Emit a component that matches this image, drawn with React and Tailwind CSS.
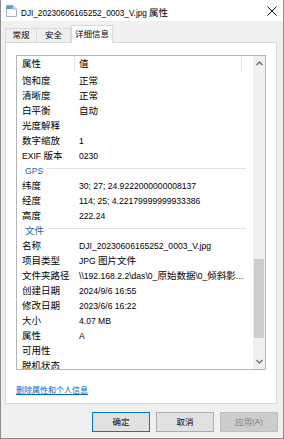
import React from 'react';

const CJK = /([\u2e80-\u9fff\uff00-\uffef]+)/;

// splits a string into CJK and latin runs so each gets its own size
function Mixed({ text, cjk, lat }) {
  return text
    .split(CJK)
    .filter(Boolean)
    .map((part, i) =>
      CJK.test(part) ? (
        <span key={i} className={cjk}>
          {part}
        </span>
      ) : (
        <span key={i} className={lat}>
          {part}
        </span>
      )
    );
}

const rows = [
  { k: '饱和度', v: '正常' },
  { k: '清晰度', v: '正常' },
  { k: '白平衡', v: '自动' },
  { k: '光度解释', v: '' },
  { k: '数字缩放', v: '1' },
  { k: 'EXIF 版本', v: '0230' },
  { group: 'GPS' },
  { k: '纬度', v: '30; 27; 24.9222000000008137' },
  { k: '经度', v: '114; 25; 4.22179999999933386' },
  { k: '高度', v: '222.24' },
  { group: '文件' },
  { k: '名称', v: 'DJI_20230606165252_0003_V.jpg' },
  { k: '项目类型', v: 'JPG 图片文件' },
  { k: '文件夹路径', v: '\\\\192.168.2.2\\das\\0_原始数据\\0_倾斜影...' },
  { k: '创建日期', v: '2024/9/6 16:55' },
  { k: '修改日期', v: '2023/6/6 16:22' },
  { k: '大小', v: '4.07 MB' },
  { k: '属性', v: 'A' },
  { k: '可用性', v: '' },
  { k: '脱机状态', v: '' },
];

function Row({ row }) {
  if (row.group) {
    return (
      <div className="h-[15px] flex items-center pl-[8px] shrink-0">
        <span className="text-[#2b5fb3] leading-none whitespace-nowrap">
          <Mixed text={row.group} cjk="text-[9.5px]" lat="text-[8.6px]" />
        </span>
        <div className="flex-1 h-px bg-[#dfe5ef] ml-[4px] mr-[7px]" />
      </div>
    );
  }
  return (
    <div className="h-[15px] flex items-center shrink-0 text-black whitespace-nowrap">
      <div className="w-[58px] pl-[5px] leading-none">
        <Mixed text={row.k} cjk="text-[9.5px]" lat="text-[8.6px]" />
      </div>
      <div className="flex-1 pl-[4px] leading-none overflow-hidden">
        <Mixed text={row.v} cjk="text-[9.5px]" lat="text-[8.6px]" />
      </div>
    </div>
  );
}

function Chevron({ up }) {
  return (
    <svg width="7" height="5" viewBox="0 0 7 5">
      <polyline
        points={up ? '0.5,4 3.5,1 6.5,4' : '0.5,1 3.5,4 6.5,1'}
        fill="none"
        stroke="#606060"
        strokeWidth="1.2"
      />
    </svg>
  );
}

export default function App() {
  return (
    <div className="w-[284px] h-[439px] bg-[#f0f0f0] border-x border-b border-[#8c8c8c] font-['Liberation_Sans','Noto_Sans_CJK_SC',sans-serif] text-black overflow-hidden flex flex-col">
      {/* Title bar */}
      <div className="h-[21px] bg-white flex items-center shrink-0">
        <svg width="11" height="12" viewBox="0 0 11 12" className="ml-[5px]">
          <path d="M0.5 0.5 H7 L10.5 4 V11.5 H0.5 Z" fill="#ffffff" stroke="#9db4cc" />
          <path d="M0.5 0.5 H7 V4 H0.5 Z" fill="#5a9be0" />
          <path d="M7 0.5 V4 H10.5" fill="none" stroke="#9db4cc" />
        </svg>
        <div className="ml-[4px] leading-none whitespace-nowrap">
          <Mixed text="DJI_20230606165252_0003_V.jpg 属性" cjk="text-[9.5px]" lat="text-[8.2px]" />
        </div>
        <div className="flex-1" />
        <svg width="10" height="10" viewBox="0 0 10 10" className="mr-[6px]">
          <path d="M0.5 0.5 L9.5 9.5 M9.5 0.5 L0.5 9.5" stroke="#1a1a1a" strokeWidth="1" />
        </svg>
      </div>

      {/* Tabs */}
      <div className="h-[21px] flex items-end pl-[4px] shrink-0">
        <div className="h-[14px] w-[32px] border border-b-0 border-[#d9d9d9] flex items-center justify-center text-[8.5px] leading-none">
          常规
        </div>
        <div className="h-[14px] w-[34px] border border-b-0 border-l-0 border-[#d9d9d9] flex items-center justify-center text-[8.5px] leading-none">
          安全
        </div>
        <div className="h-[18px] w-[42px] -mb-px relative z-10 bg-white border border-b-0 border-[#d9d9d9] flex items-center justify-center text-[8.5px] leading-none">
          详细信息
        </div>
      </div>

      {/* Panel */}
      <div className="ml-[4px] w-[272px] h-[362px] bg-white border border-[#d9d9d9] flex flex-col pl-[10px] pt-[12px] shrink-0">
        <div className="w-[250px] h-[315px] border border-[#b4b4b4] flex overflow-hidden">
          <div className="flex-1 flex flex-col overflow-hidden">
            {/* Header */}
            <div className="h-[15px] flex shrink-0 whitespace-nowrap">
              <div className="w-[58px] pl-[5px] border-r border-[#e5e5e5] flex items-center text-[9.5px] leading-none">
                属性
              </div>
              <div className="w-[167px] pl-[4px] border-r border-[#e5e5e5] flex items-center text-[9.5px] leading-none">
                值
              </div>
              <div className="flex-1" />
            </div>
            {rows.map((row, i) => (
              <Row key={i} row={row} />
            ))}
          </div>
          {/* Scrollbar */}
          <div className="w-[12px] bg-[#f0f0f0] flex flex-col shrink-0">
            <div className="h-[15px] flex items-center justify-center shrink-0">
              <Chevron up />
            </div>
            <div className="h-[188px] shrink-0" />
            <div className="h-[79px] w-[10px] ml-px bg-[#cdcdcd] shrink-0" />
            <div className="flex-1" />
            <div className="h-[15px] flex items-center justify-center shrink-0">
              <Chevron />
            </div>
          </div>
        </div>
        <div className="mt-[10px] leading-none">
          <span className="text-[8px] text-[#0066cc] underline">删除属性和个人信息</span>
        </div>
      </div>

      {/* Buttons */}
      <div className="flex justify-end gap-[6px] pr-[5px] mt-[8px]">
        <button className="w-[58px] h-[20px] bg-[#e1e1e1] border border-[#0078d7] text-[8.5px] leading-none flex items-center justify-center">
          确定
        </button>
        <button className="w-[58px] h-[20px] bg-[#e1e1e1] border border-[#adadad] text-[8.5px] leading-none flex items-center justify-center">
          取消
        </button>
        <button className="w-[58px] h-[20px] bg-[#cccccc] border border-[#bfbfbf] text-[#838383] leading-none flex items-center justify-center">
          <Mixed text="应用(A)" cjk="text-[8.5px]" lat="text-[8px]" />
        </button>
      </div>
    </div>
  );
}
